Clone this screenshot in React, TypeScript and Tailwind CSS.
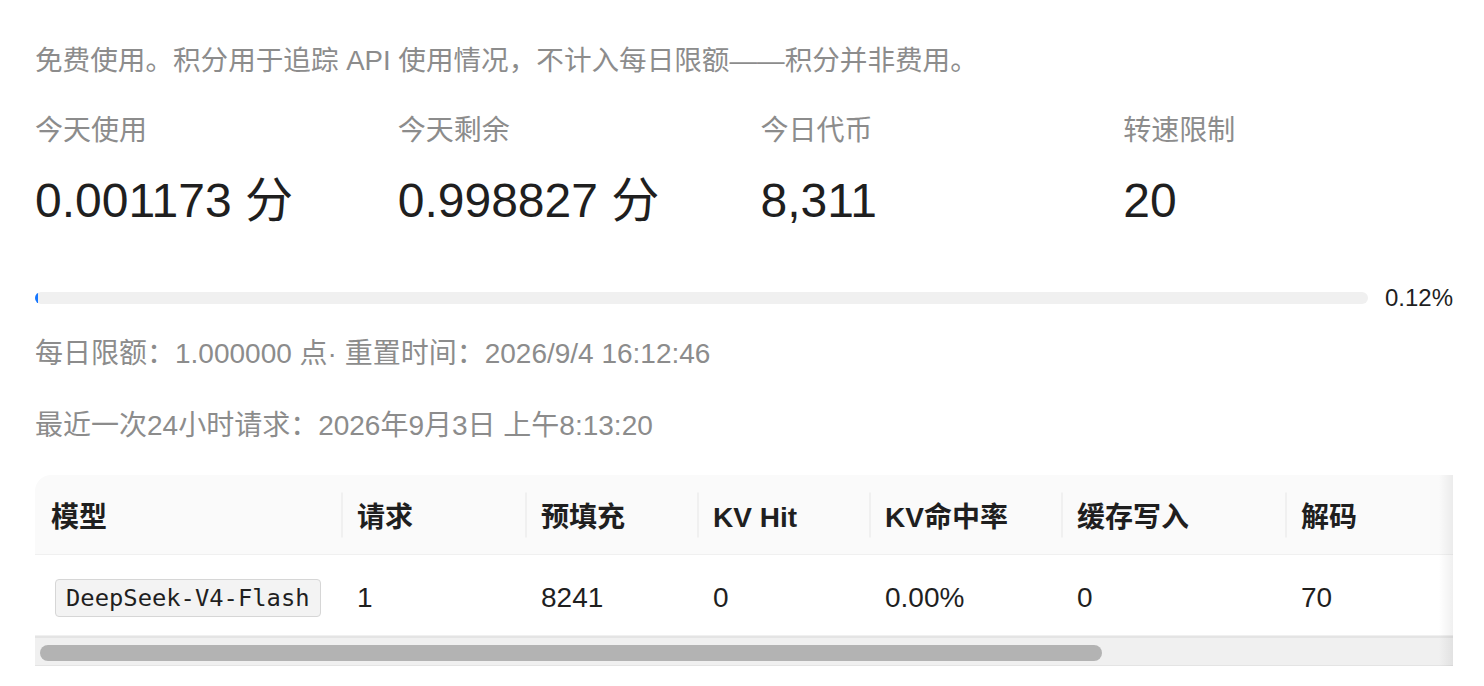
import React from 'react';

const stats = [
  { label: '今天使用', value: '0.001173 分' },
  { label: '今天剩余', value: '0.998827 分' },
  { label: '今日代币', value: '8,311' },
  { label: '转速限制', value: '20' },
];

const columns = [
  { title: '模型', width: 306 },
  { title: '请求', width: 184 },
  { title: '预填充', width: 172 },
  { title: 'KV Hit', width: 172 },
  { title: 'KV命中率', width: 192 },
  { title: '缓存写入', width: 224 },
  { title: '解码', width: 630 },
];

const rows = [
  { model: 'DeepSeek-V4-Flash', cells: ['1', '8241', '0', '0.00%', '0', '70'] },
];

const usedPercent = 0.12;
const tableWidth = columns.reduce((sum, c) => sum + c.width, 0);
const viewWidth = 1418;

export default function App() {
  return (
    <div className="min-h-screen bg-white pl-[35px] pr-[31px] pt-[41px] font-['Liberation_Sans','Noto_Sans_CJK_SC',sans-serif] text-[#1f1f1f]">
      <p className="text-[27.6px] leading-[39px] text-[#8c8c8c]">
        免费使用。积分用于追踪 API 使用情况，不计入每日限额——积分并非费用。
      </p>

      <div className="mt-[30px] grid grid-cols-4 gap-x-[33px]">
        {stats.map((s) => (
          <div key={s.label}>
            <div className="text-[28px] leading-[42px] text-[#8c8c8c]">{s.label}</div>
            <div className="mt-[20px] text-[48px] leading-[58px]">{s.value}</div>
          </div>
        ))}
      </div>

      <div className="mt-[50px] flex items-center gap-[17px]">
        <div className="h-[12px] flex-1 overflow-hidden rounded-full bg-[#f0f0f0]">
          <div className="h-full min-w-[3px] rounded-full bg-[#1677ff]" style={{ width: `${usedPercent}%` }} />
        </div>
        <span className="text-[24px] leading-[36px]">{usedPercent.toFixed(2)}%</span>
      </div>

      <p className="mt-[17px] text-[28px] leading-[42px] text-[#8c8c8c]">
        每日限额：1.000000 点· 重置时间：2026/9/4 16:12:46
      </p>
      <p className="mt-[30px] text-[28px] leading-[42px] text-[#8c8c8c]">
        最近一次24小时请求：2026年9月3日 上午8:13:20
      </p>

      <div className="relative mt-[28px]">
        <div className="overflow-hidden">
          <table className="table-fixed border-separate border-spacing-0 text-left" style={{ width: tableWidth }}>
            <colgroup>
              {columns.map((c) => (
                <col key={c.title} style={{ width: c.width }} />
              ))}
            </colgroup>
            <thead>
              <tr>
                {columns.map((c, i) => (
                  <th
                    key={c.title}
                    className={
                      i === 0
                        ? 'relative h-[80px] rounded-tl-[16px] border-b border-[#f0f0f0] bg-[#fafafa] px-4 pt-[6px] pb-0 text-[28px] font-bold leading-[42px]'
                        : "relative h-[80px] border-b border-[#f0f0f0] bg-[#fafafa] px-4 pt-[6px] pb-0 text-[28px] font-bold leading-[42px] before:absolute before:left-0 before:top-1/2 before:h-[45px] before:w-[2px] before:-translate-y-1/2 before:bg-[#f0f0f0] before:content-['']"
                    }
                  >
                    {c.title}
                  </th>
                ))}
              </tr>
            </thead>
            <tbody>
              {rows.map((r) => (
                <tr key={r.model}>
                  <td className="h-[81px] border-b border-[#f0f0f0] px-4 pt-[6px] pb-0 align-middle">
                    <code className="ml-[4px] inline-block rounded-[4px] border border-[#d6d6d6] bg-[#f3f3f3] px-[10px] font-['DejaVu_Sans_Mono',monospace] text-[23.8px] leading-[36px]">
                      {r.model}
                    </code>
                  </td>
                  {r.cells.map((v, i) => (
                    <td key={i} className="h-[81px] border-b border-[#f0f0f0] px-4 pt-[6px] pb-0 text-[28px] leading-[42px]">
                      {v}
                    </td>
                  ))}
                </tr>
              ))}
            </tbody>
          </table>
        </div>
        <div className="h-[30px] border-t-2 border-b border-[#e4e4e4] bg-[#f0f0f0] px-[5px] pt-[7px]">
          <div
            className="h-[16px] rounded-full bg-[#b3b3b3]"
            style={{ width: `${(viewWidth / tableWidth) * 100}%` }}
          />
        </div>
        <div className="pointer-events-none absolute inset-y-0 right-0 w-[14px] bg-linear-to-l from-black/[0.06] to-transparent" />
      </div>
    </div>
  );
}
